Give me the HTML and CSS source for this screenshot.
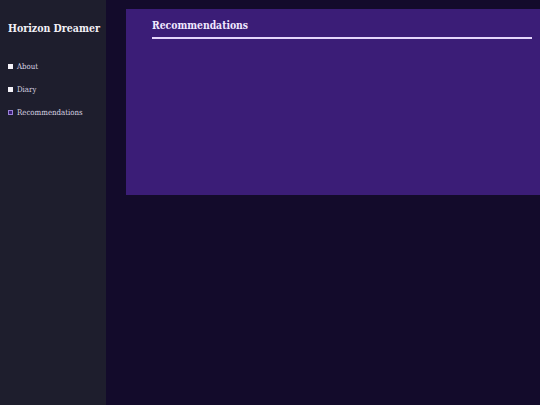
FILE: index.html
```html
<!DOCTYPE html>
<html>

<head>
    <meta charset="UTF-8">
    <title>Horizon Dreamer - Recommendations</title>
    <link rel="stylesheet" href="styles.css">
</head>

<body>
    <div class="layout">
        <nav class="sidebar">
            <h1 class="site-title">Horizon Dreamer</h1>
            <ul class="menu">
                <li class="menu-item">About</li>
                <li class="menu-item">Diary</li>
                <li class="menu-item active">Recommendations</li>
            </ul>
        </nav>
        <main class="content">
            <section class="panel">
                <h2 class="panel-title">Recommendations</h2>
            </section>
        </main>
    </div>
</body>

</html>
```

FILE: styles.css
```css
html,
body {
    margin: 0;
    height: 100%;
}

body {
    background-color: #130b2b;
    color: #e6e1f0;
    font-family: "DejaVu Serif", "Liberation Serif", serif;
    font-stretch: condensed;
}

.layout {
    display: flex;
    height: 100%;
    overflow: hidden;
}

.sidebar {
    width: 106px;
    flex-shrink: 0;
    background-color: #1e1e2d;
    padding: 22px 0 0 8px;
    box-sizing: border-box;
}

.site-title {
    margin: 0;
    font-size: 10.5px;
    line-height: 12px;
    font-weight: bold;
    color: #f2f0f6;
    white-space: nowrap;
}

.menu {
    list-style: none;
    margin: 21px 0 0;
    padding: 0;
}

.menu-item {
    display: flex;
    align-items: center;
    gap: 4px;
    height: 23px;
    font-size: 7.8px;
    color: #d8d4e2;
    white-space: nowrap;
}

.menu-item::before {
    content: "";
    width: 5px;
    height: 5px;
    background-color: #f4f2f8;
}

.menu-item.active::before {
    box-sizing: border-box;
    background-color: #3c1e78;
    border: 1px solid #9a82d8;
}

.content {
    flex: 1;
    padding: 9px 0 0 20px;
    min-width: 0;
}

.panel {
    width: 432px;
    height: 186px;
    box-sizing: border-box;
    background-color: #3b1d77;
    padding: 10px 26px 0;
}

.panel-title {
    margin: 0;
    padding-bottom: 6px;
    border-bottom: 2px solid #e4d6fb;
    font-size: 10.3px;
    line-height: 12px;
    font-weight: bold;
    color: #f0e8ff;
}
```
